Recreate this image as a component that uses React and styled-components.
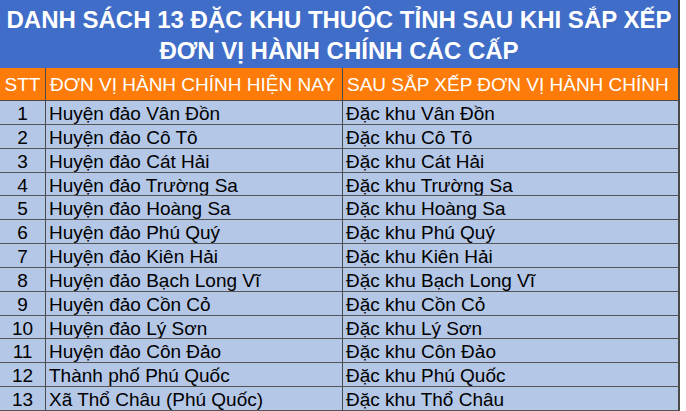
import styled, { createGlobalStyle } from 'styled-components';

const rows = [
  ['Huyện đảo Vân Đồn', 'Đặc khu Vân Đồn'],
  ['Huyện đảo Cô Tô', 'Đặc khu Cô Tô'],
  ['Huyện đảo Cát Hải', 'Đặc khu Cát Hải'],
  ['Huyện đảo Trường Sa', 'Đặc khu Trường Sa'],
  ['Huyện đảo Hoàng Sa', 'Đặc khu Hoàng Sa'],
  ['Huyện đảo Phú Quý', 'Đặc khu Phú Quý'],
  ['Huyện đảo Kiên Hải', 'Đặc khu Kiên Hải'],
  ['Huyện đảo Bạch Long Vĩ', 'Đặc khu Bạch Long Vĩ'],
  ['Huyện đảo Cồn Cỏ', 'Đặc khu Cồn Cỏ'],
  ['Huyện đảo Lý Sơn', 'Đặc khu Lý Sơn'],
  ['Huyện đảo Côn Đảo', 'Đặc khu Côn Đảo'],
  ['Thành phố Phú Quốc', 'Đặc khu Phú Quốc'],
  ['Xã Thổ Châu (Phú Quốc)', 'Đặc khu Thổ Châu'],
];

const GlobalStyle = createGlobalStyle`
  body {
    margin: 0;
    background: #ffffff;
    font-family: "Liberation Sans", Arial, sans-serif;
  }
`;

function App() {
  return (
    <>
      <GlobalStyle />
      <StyledSheet>
        <StyledTitle>
          DANH SÁCH 13 ĐẶC KHU THUỘC TỈNH SAU KHI SẮP XẾP
          <br />
          ĐƠN VỊ HÀNH CHÍNH CÁC CẤP
        </StyledTitle>
        <StyledGrid>
          <StyledHeadCell $center>STT</StyledHeadCell>
          <StyledHeadCell>ĐƠN VỊ HÀNH CHÍNH HIỆN NAY</StyledHeadCell>
          <StyledHeadCell>SAU SẮP XẾP ĐƠN VỊ HÀNH CHÍNH</StyledHeadCell>
          {rows.map(([before, after], i) => (
            <StyledRow key={i}>
              <StyledCell $center>{i + 1}</StyledCell>
              <StyledCell>{before}</StyledCell>
              <StyledCell>{after}</StyledCell>
            </StyledRow>
          ))}
        </StyledGrid>
      </StyledSheet>
    </>
  );
}

export default App;

const StyledSheet = styled.div`
  width: 680px;
  height: 411px;
  overflow: hidden;
`;

const StyledTitle = styled.div`
  height: 68px;
  box-sizing: border-box;
  padding-top: 4px;
  background: #3f6dc8;
  border-right: 2px solid #3a3a3a;
  color: #ffffff;
  font-weight: 700;
  font-size: 24px;
  line-height: 31px;
  text-align: center;
  white-space: nowrap;
`;

const StyledGrid = styled.div`
  display: grid;
  grid-template-columns: 46px 297px 337px;
  grid-template-rows: 33px repeat(13, 23.85px);
`;

const StyledRow = styled.div`
  display: contents;
`;

const StyledHeadCell = styled.div`
  background: #fd7b08;
  color: #ffffff;
  font-size: 19px;
  line-height: 34px;
  padding-left: ${(p) => (p.$center ? '0' : '4px')};
  text-align: ${(p) => (p.$center ? 'center' : 'left')};
  border-right: 1px solid #4a4a4a;
  border-bottom: 1px solid #4a4a4a;
  white-space: nowrap;
  overflow: hidden;
  &:nth-child(3) {
    border-right-width: 2px;
  }
`;

const StyledCell = styled.div`
  box-sizing: border-box;
  background: #b4c7e7;
  color: #000000;
  font-size: 19px;
  line-height: 25px;
  padding-left: ${(p) => (p.$center ? '0' : '3px')};
  text-align: ${(p) => (p.$center ? 'center' : 'left')};
  border-right: 1px solid #4a4a4a;
  border-bottom: 1px solid #555555;
  white-space: nowrap;
  overflow: hidden;
  &:nth-child(3) {
    border-right-width: 2px;
  }
`;
